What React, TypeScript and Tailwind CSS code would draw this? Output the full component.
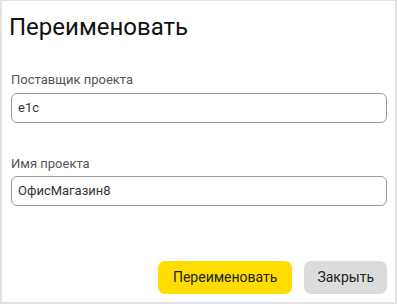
export default function App() {
  return (
    <div className="w-[398px] h-[306px] bg-white" style={{ fontFamily: "Roboto, 'Liberation Sans', sans-serif" }}>
      <div className="w-[397px] h-[304px] border-x-2 border-t border-b-2 border-[#e2e2e2] flex flex-col px-[7px]">
        <h1 className="text-[24px] leading-[28px] text-[#111] mt-[12px]">Переименовать</h1>

        <div className="mt-[31px] px-[2px]">
          <label className="block text-[13px] leading-[16px] text-[#555]">Поставщик проекта</label>
          <div className="mt-[5px] h-[30px] w-[376px] rounded-[6px] border border-[#9a9a9a] flex items-center px-[6px] text-[13px] text-[#333]">
            e1c
          </div>
        </div>

        <div className="mt-[33px] px-[2px]">
          <label className="block text-[13px] leading-[16px] text-[#555]">Имя проекта</label>
          <div className="mt-[4px] h-[30px] w-[376px] rounded-[6px] border border-[#9a9a9a] flex items-center px-[6px] text-[13px] text-[#333]">
            ОфисМагазин8
          </div>
        </div>

        <div className="mt-auto mb-[8px] flex justify-end gap-[12px] pr-[1px]">
          <button className="h-[33px] px-[15px] rounded-[7px] bg-[#ffdd00] text-[14px] text-[#222]">Переименовать</button>
          <button className="h-[33px] px-[13px] rounded-[7px] bg-[#dcdcdc] text-[14px] text-[#222]">Закрыть</button>
        </div>
      </div>
    </div>
  );
}
